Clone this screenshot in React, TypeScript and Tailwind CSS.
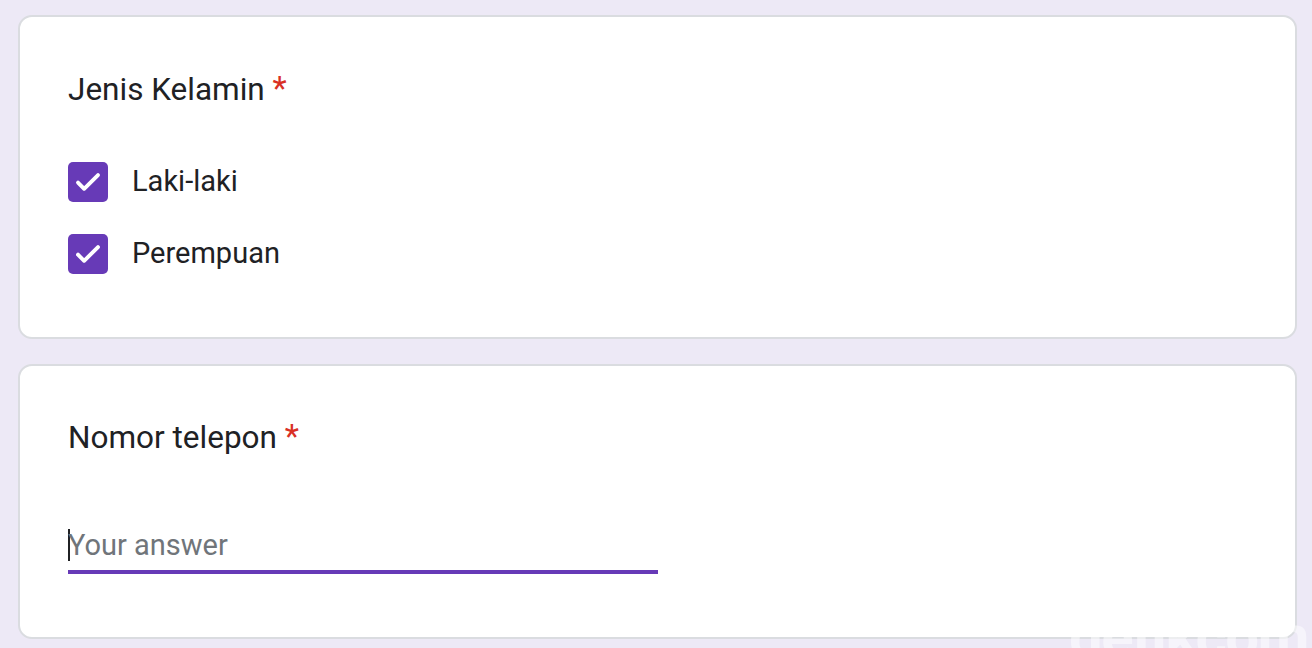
import type { FC, ReactNode } from "react";

const font = { fontFamily: "Roboto, 'Liberation Sans', sans-serif" };

const Card: FC<{ children: ReactNode; className?: string }> = ({ children, className }) => (
  <div className={`bg-white border-2 border-[#dadce0] rounded-[14px] px-[48px] ${className ?? ""}`}>
    {children}
  </div>
);

const Title: FC<{ text: string }> = ({ text }) => (
  <h2 className="text-[31.5px] leading-[38px] text-[#202124]">
    {text} <span className="text-[#d93025] text-[33px]">*</span>
  </h2>
);

const CheckOption: FC<{ label: string }> = ({ label }) => (
  <div className="flex items-center gap-[24px] h-[40px]">
    <div className="w-[40px] h-[40px] rounded-[5px] bg-[#673ab7] flex items-center justify-center">
      <svg width="32" height="32" viewBox="0 0 24 24" fill="none">
        <path d="M4.5 12.5l4.6 4.6L19.5 6.8" stroke="white" strokeWidth="2.9" strokeLinecap="round" strokeLinejoin="round" />
      </svg>
    </div>
    <span className="text-[29px] text-[#202124]">{label}</span>
  </div>
);

export default function App() {
  return (
    <div className="w-[1312px] h-[648px] bg-[#ede9f6] pl-[18px] pr-[15px] pt-[15px] relative overflow-hidden" style={font}>
      <Card className="h-[324px] pt-[53px]">
        <Title text="Jenis Kelamin" />
        <div className="mt-[53px] flex flex-col gap-[32px]">
          <CheckOption label="Laki-laki" />
          <CheckOption label="Perempuan" />
        </div>
      </Card>

      <Card className="mt-[25px] h-[275px] pt-[52px]">
        <Title text="Nomor telepon" />
        <div className="mt-[72px] w-[590px] border-b-[4px] border-[#673ab7] pb-[9px] flex items-center">
          <span className="w-[2px] h-[32px] bg-[#202124] -mr-[2px]" />
          <span className="text-[29px] text-[#70757a] leading-[32px]">Your answer</span>
        </div>
      </Card>

      <span className="absolute right-[4px] bottom-[-34px] text-[60px] font-bold text-white/50 tracking-tight pointer-events-none select-none">
        detikcom
      </span>
    </div>
  );
}
